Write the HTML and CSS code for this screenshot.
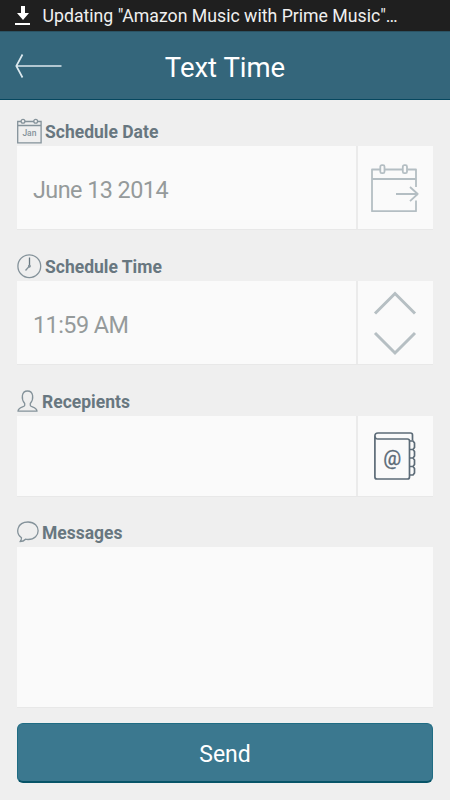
FILE: index.html
```html
<!DOCTYPE html>
<html lang="en">
<head>
<meta charset="utf-8">
<title>Text Time</title>
<link rel="stylesheet" href="styles.css">
</head>
<body>
<div class="status">
  <svg width="16" height="20" viewBox="0 0 16 20"><path d="M6 0h4v7h4l-6 7-6-7h4zM0 17h15v2H0z" fill="#fff"/></svg>
  <span>Updating "Amazon Music with Prime Music"…</span>
</div>
<header class="header">
  <svg width="48" height="26" viewBox="0 0 48 26"><path d="M7.5 1.500L1.300 13l6.200 11.500M1.500 13H46.500" fill="none" stroke="#dbe8ee" stroke-width="1.700"/></svg>
  <h1>Text Time</h1>
</header>
<main class="form">
  <section class="field">
    <div class="label">
      <svg width="25" height="26" viewBox="0 0 25 26" fill="none" stroke="#84929a" stroke-width="1.300"><path d="M4 3.500H.7v21.300h23.400V3.500H21M8 3.500h9M.7 7.500h23.400"/><circle cx="6" cy="3.200" r="1.900"/><circle cx="18.700" cy="3.200" r="1.900"/><text x="12.400" y="17.800" class="month">Jan</text></svg>
      <span>Schedule Date</span>
    </div>
    <div class="row">
      <div class="value">June 13 2014</div>
      <div class="action">
        <svg width="48" height="49" viewBox="0 0 48 49" fill="none" stroke="#b4bec3" stroke-width="1.800" stroke-linejoin="round"><path d="M9 5.500H1v41.700h44V36.500M14 5.500h17.500M36.500 5.500H45V23M1 15h44"/><rect x="9.300" y="1.200" width="4.200" height="8" rx="1.500"/><rect x="31.800" y="1.200" width="4.200" height="8" rx="1.500"/><path d="M25 30h21.500M39 23l7.700 7-7.700 7.200"/></svg>
      </div>
    </div>
  </section>
  <section class="field">
    <div class="label">
      <svg width="25" height="26" viewBox="0 0 25 26" fill="none" stroke="#84929a" stroke-width="1.300"><circle cx="12.300" cy="13.200" r="11.400"/><path d="M12.500 4.500v9" stroke="#687780"/><path d="M12.500 13l-4 4.500"/><circle cx="12.400" cy="13.200" r=".8" fill="#687780"/></svg>
      <span>Schedule Time</span>
    </div>
    <div class="row">
      <div class="value">11:59 AM</div>
      <div class="action">
        <svg width="44" height="66" viewBox="0 0 44 66" fill="none" stroke="#b6bfc3" stroke-width="3"><path d="M2 23.500L22 3.500l20 20M2 43l20 20 20-20"/></svg>
      </div>
    </div>
  </section>
  <section class="field short">
    <div class="label">
      <svg width="22" height="26" viewBox="0 0 22 26" fill="none" stroke="#84929a" stroke-width="1.300" stroke-linejoin="round"><path d="M7.700 15.500C4 11 4.300 3 10.500 3s6.500 8 2.800 12.500v2c0 1.500 6.700 1.500 6.700 5.700H1c0-4.200 6.700-4.200 6.700-5.700z"/></svg>
      <span>Recepients</span>
    </div>
    <div class="row">
      <div class="value"></div>
      <div class="action">
        <svg width="42" height="49" viewBox="0 0 42 49" fill="none" stroke="#5c6b77" stroke-width="1.700" stroke-linejoin="round"><path d="M38.500 8.500V3a2 2 0 0 0-2-2H4C2 1 .900 2 .900 4v41a2 2 0 0 0 2 2h30.600a2 2 0 0 0 2-2V9a2 2 0 0 0-2-2H4Q1 7 1 4"/><path d="M36 9h3l1.500 2v4.500l-1.500 2h-3h3l1.500 2V24l-1.500 2h-3h3l1.500 2v4.500l-1.500 2h-3h3l1.500 2V41l-1.500 2h-3"/><text x="18.300" y="33" class="at">@</text></svg>
      </div>
    </div>
  </section>
  <section class="field message">
    <div class="label">
      <svg width="22" height="26" viewBox="0 0 22 26" fill="none" stroke="#84929a" stroke-width="1.300" stroke-linejoin="round"><path d="M4.500 18.800C-2 14 0 3 11 3c13.500 0 13.500 17.500 0 17.500q-1.500 0-2.500-.3-2 2.300-5.500 2.500 1.500-1.500 1.500-3.900z"/></svg>
      <span>Messages</span>
    </div>
    <div class="row"><div class="value"></div></div>
  </section>
  <button class="send" type="button">Send</button>
</main>
</body>
</html>
```

FILE: styles.css
```css
* { box-sizing: border-box; }
body {
  margin: 0;
  height: 800px;
  overflow: hidden;
  background: #efefef;
  font-family: Roboto, "Liberation Sans", sans-serif;
}
svg { display: block; flex: none; }
.status {
  display: flex;
  align-items: center;
  gap: 11.5px;
  height: 31px;
  padding-left: 15px;
  background: #1f1f1f;
  color: #f0f0f0;
  font-size: 17.7px;
  white-space: nowrap;
}
.header {
  display: grid;
  grid-template-columns: 48px 1fr 48px;
  align-items: center;
  height: 69px;
  padding: 0 15px;
  background: #34667b;
  border-top: 1px solid #2b5364;
  border-bottom: 1px solid #06475f;
}
h1 {
  margin: 5px 0 0;
  color: #fff;
  font-size: 27.5px;
  font-weight: 400;
  line-height: 34px;
  text-align: center;
}
.form { padding: 16px 17px 0; }
.field { height: 135px; }
.label {
  display: flex;
  align-items: center;
  height: 30px;
  gap: 3px;
  color: #687780;
  font-size: 17.5px;
  font-weight: 700;
}
.label svg { margin-top: -1px; }
.label span { padding-top: 2px; }
.month {
  fill: #84929a;
  stroke: none;
  font: 500 8.5px Roboto, sans-serif;
  text-anchor: middle;
}
.row {
  display: flex;
  gap: 2px;
  height: 84px;
  width: 416px;
  border-bottom: 1px solid #e8e8e8;
  background: #ebebeb;
}
.value {
  flex: 1;
  display: flex;
  align-items: center;
  padding: 4px 0 0 16px;
  background: #fafafa;
  color: #959a9b;
  font-size: 23.4px;
  letter-spacing: -0.55px;
}
.action {
  display: flex;
  align-items: center;
  justify-content: center;
  width: 75px;
  padding: 1px 2px 0 0;
  background: #fafafa;
}
.short { height: 131px; }
.short .row { height: 81px; }
.message { height: 191px; }
.message .row { height: 161px; }
.at {
  fill: #5c6b77;
  stroke: #5c6b77;
  stroke-width: 0.3px;
  font: 400 20px Roboto, sans-serif;
  text-anchor: middle;
}
.send {
  display: block;
  width: 416px;
  height: 60px;
  margin-top: 15px;
  padding: 3px 0 0;
  border: 1px solid #1f6c83;
  border-bottom: 2px solid #075468;
  border-radius: 6px;
  background: #3b788f;
  color: #fff;
  font: 400 23px Roboto, sans-serif;
}
```
